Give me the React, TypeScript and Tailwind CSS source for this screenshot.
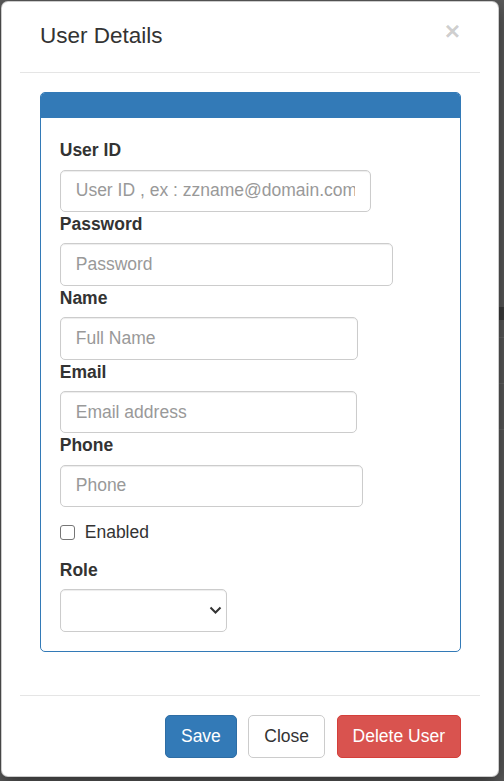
import React from "react";

const font = { fontFamily: '"Liberation Sans", Arial, sans-serif' };

function Field({ label, placeholder, width }: { label: string; placeholder: string; width: string }) {
  return (
    <div>
      <label className="block font-bold text-[17.5px] leading-[25px] mb-[6.25px] text-[#333]">{label}</label>
      <input
        placeholder={placeholder}
        className={`block ${width} h-[42.5px] border border-[#ccc] rounded-[5px] px-[15px] text-[17.5px] text-[#555] placeholder:text-[#999] shadow-[inset_0_1px_1px_rgba(0,0,0,0.075)] outline-none bg-white`}
      />
    </div>
  );
}

export default function App() {
  return (
    <div style={font} className="relative w-[504px] h-[781px] bg-[#5c5c5c] overflow-hidden">
      {/* underlying page hints on the right edge */}
      <div className="absolute left-[499px] top-[307px] w-[5px] h-[13px] bg-[#3e3e3e]" />
      <div className="absolute left-[499px] top-[337px] w-[5px] h-px bg-[#6a6a6a]" />
      <div className="absolute left-[499px] top-[383px] w-[5px] h-px bg-[#6a6a6a]" />
      <div className="absolute left-[499px] top-[429px] w-[5px] h-px bg-[#6a6a6a]" />

      <div className="relative ml-px mt-px w-[498px] h-[776px] bg-white border border-black/20 rounded-[7px] shadow-[0_6px_19px_rgba(0,0,0,0.5)] flex flex-col text-[#333]">
        {/* header */}
        <div className="mx-[18px] mt-[18px] px-[20px] pb-[20px] border-b border-[#e5e5e5] flex justify-between items-start">
          <h4 className="text-[22.5px] leading-[32px] font-normal">User Details</h4>
          <button className="text-[26.25px] leading-none font-bold text-black/20 -mt-[2.5px]">×</button>
        </div>

        {/* body */}
        <div className="pl-[38px] pr-[37px] pt-[18.75px] pb-[42.75px]">
          <div className="border border-[#337ab7] rounded-[5px] overflow-hidden">
            <div className="h-[25px] bg-[#337ab7]" />
            <div className="px-[18.75px] pt-[20.5px] pb-[19.5px]">
              <Field label="User ID" placeholder="User ID , ex : zzname@domain.com" width="w-[311px]" />
              <Field label="Password" placeholder="Password" width="w-[333px]" />
              <Field label="Name" placeholder="Full Name" width="w-[298px]" />
              <Field label="Email" placeholder="Email address" width="w-[297px]" />
              <Field label="Phone" placeholder="Phone" width="w-[303px]" />

              <div className="mt-[12.5px] mb-[13.5px] flex items-start h-[25px]">
                <span className="mt-[5px] w-[15px] h-[15px] border border-[#767676] rounded-[3px] bg-white" />
                <span className="ml-[10px] text-[17.5px] leading-[25px]">Enabled</span>
              </div>

              <label className="block font-bold text-[17.5px] leading-[25px] mb-[6.25px]">Role</label>
              <div className="relative w-[167px] h-[42.5px] border border-[#ccc] rounded-[5px] bg-white shadow-[inset_0_1px_1px_rgba(0,0,0,0.075)]">
                <svg className="absolute left-[148px] top-[16px]" width="13" height="8" viewBox="0 0 13 8">
                  <path d="M1.5 1.5 L6.5 6.5 L11.5 1.5" fill="none" stroke="#333" strokeWidth="2" />
                </svg>
              </div>
            </div>
          </div>
        </div>

        {/* footer */}
        <div className="mx-[18px] border-t border-[#e5e5e5] pt-[18.75px] px-[19px] flex justify-end gap-[11.5px]">
          <button className="h-[43px] px-[15px] rounded-[5px] border border-[#2e6da4] bg-[#337ab7] text-white text-[17.5px] leading-[25px]">Save</button>
          <button className="h-[43px] px-[15px] rounded-[5px] border border-[#ccc] bg-white text-[#333] text-[17.5px] leading-[25px]">Close</button>
          <button className="h-[43px] px-[15px] rounded-[5px] border border-[#d43f3a] bg-[#d9534f] text-white text-[17.5px] leading-[25px]">Delete User</button>
        </div>
      </div>
    </div>
  );
}
